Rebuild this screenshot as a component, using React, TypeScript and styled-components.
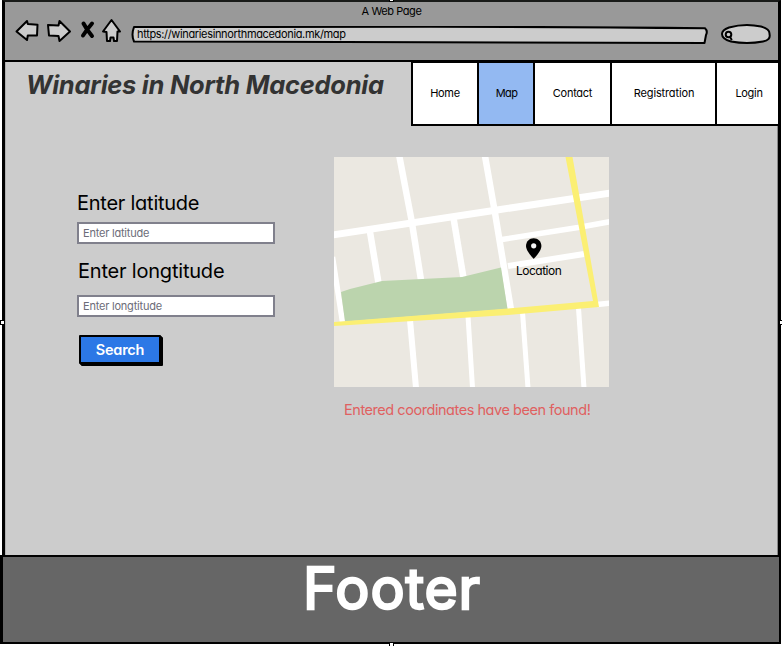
import React from "react";
import styled, { createGlobalStyle } from "styled-components";

const GlobalStyle = createGlobalStyle`
  * { box-sizing: border-box; }
  body {
    margin: 0;
    background: #fff;
    color: #000;
    font-family: Inter, "Liberation Sans", sans-serif;
    font-feature-settings: "cv11";
    overflow: hidden;
  }
  h1, h2, p { margin: 0; }
`;

const Browser = styled.div`
  position: relative;
  width: 782px;
  height: 646px;
  display: flex;
  flex-direction: column;
  background: #fff;
`;

const Toolbar = styled.header`
  height: 62px;
  margin: 0 1px 0 2px;
  background: #999;
  border: solid #000;
  border-width: 2px 3px 2px 3px;
  border-top-color: #191b19;
  display: flex;
  flex-direction: column;
`;

const PageTitle = styled.p`
  height: 19px;
  line-height: 19px;
  font-size: 11px;
  letter-spacing: -0.43px;
  text-align: center;
`;

const Controls = styled.div`
  display: flex;
  align-items: flex-start;
  height: 39px;
  padding-left: 11px;
`;

const NavIcon = styled.svg<{ $gap: number; $drop?: number }>`
  flex: none;
  display: block;
  margin-right: ${(p) => p.$gap}px;
  margin-top: ${(p) => p.$drop ?? 0}px;
  overflow: visible;
  fill: #ccc;
  stroke: #000;
  stroke-width: 2;
  stroke-linejoin: round;
  stroke-linecap: round;
`;

const Address = styled.div`
  position: relative;
  width: 577px;
  height: 18px;
  margin: 5px 13px 0 0;
  padding-left: 6px;
  line-height: 17px;
  font-size: 11px;
  letter-spacing: -0.345px;
`;

const Outline = styled.svg`
  position: absolute;
  inset: 0;
  z-index: 0;
  fill: #ccc;
  stroke: #000;
  stroke-width: 2;
  stroke-linejoin: round;
`;

const Url = styled.span`
  position: relative;
`;

const Main = styled.main`
  height: 493px;
  margin: 0 1px 0 2px;
  background: #ccc;
  border: solid #000;
  border-width: 0 3px;
  box-shadow: inset 1px 0 #b0b0b0, inset -1px 0 #888;
`;

const Masthead = styled.div`
  display: flex;
  justify-content: space-between;
  height: 65px;
`;

const SiteTitle = styled.h1`
  padding: 6px 0 0 21px;
  line-height: 34px;
  font-size: 25.5px;
  font-weight: 700;
  font-style: italic;
  letter-spacing: -0.26px;
  white-space: nowrap;
  color: #333;
`;

const Nav = styled.nav`
  display: flex;
  flex: none;
  height: 64px;
  border-bottom: 2px solid #000;
  border-top: 1px solid #000;
`;

const NavItem = styled.a<{ $width: number; $spacing: number; $active?: boolean; $shift?: number }>`
  width: ${(p) => p.$width}px;
  padding-left: ${(p) => p.$shift ?? 0}px;
  border-left: 2px solid #000;
  background: ${(p) => (p.$active ? "#93b9f2" : "#fff")};
  font-size: 11px;
  letter-spacing: ${(p) => p.$spacing}px;
  line-height: 60px;
  text-align: center;
`;

const Content = styled.div`
  display: flex;
  align-items: flex-start;
  padding-left: 72px;
`;

const SearchForm = styled.form`
  width: 257px;
  padding-top: 63px;
  display: flex;
  flex-direction: column;
  align-items: flex-start;
`;

const Label = styled.label<{ $indent?: number; $spacing: number }>`
  padding-left: ${(p) => p.$indent ?? 0}px;
  height: 26px;
  line-height: 26px;
  font-size: 20px;
  letter-spacing: ${(p) => p.$spacing}px;
`;

const Field = styled.input<{ $after: number; $before: number }>`
  width: 198px;
  height: 22px;
  margin: ${(p) => p.$before}px 0 ${(p) => p.$after}px;
  padding: 0 4px;
  border: 2px solid #80808c;
  border-radius: 0;
  background: #fff;
  font: 400 11px Inter, "Liberation Sans", sans-serif;
  font-feature-settings: "cv11";
  letter-spacing: -0.21px;
  &::placeholder { color: #6c6c78; opacity: 1; }
`;

const SearchButton = styled.button`
  width: 82px;
  height: 29px;
  margin: 0 0 0 2px;
  padding: 0;
  border: 2px solid #000;
  border-radius: 1px;
  background: #2c78e6;
  box-shadow: 1px 1px #000, 2px 2px #000;
  color: #fff;
  font: 600 14.5px Inter, "Liberation Sans", sans-serif;
  font-feature-settings: "cv11";
  letter-spacing: -0.25px;
`;

const Result = styled.section`
  width: 275px;
  padding-top: 30px;
`;

const MapFrame = styled.div`
  position: relative;
  width: 275px;
  height: 230px;
`;

const MapArt = styled.svg`
  display: block;
`;

const PinLabel = styled.span`
  position: absolute;
  left: 182px;
  top: 105px;
  line-height: 18px;
  font-size: 12px;
  letter-spacing: -0.5px;
`;

const Message = styled.p`
  padding-left: 10px;
  margin-top: 12px;
  line-height: 22px;
  font-size: 14.5px;
  letter-spacing: -0.45px;
  white-space: nowrap;
  color: #e06060;
`;

const Footer = styled.footer`
  height: 89px;
  margin-right: 1px;
  border: 2px solid #000;
  box-shadow: inset 1px 0 #000;
  background: #666;
  display: flex;
  justify-content: center;
`;

const FooterText = styled.h2`
  color: #fff;
  font-size: 57px;
  font-weight: 400;
  line-height: 63px;
  letter-spacing: 0.9px;
  padding-left: 3px;
  -webkit-text-stroke: 2.4px #fff;
  stroke-linejoin: round;
`;

const Handle = styled.i<{ $x: number; $y: number }>`
  position: absolute;
  left: ${(p) => p.$x}px;
  top: ${(p) => p.$y}px;
  width: 5px;
  height: 5px;
  background: #fff;
  border: 1px solid #000;
`;

const streets: [string, number][] = [
  ["M-2 78 L163 53 L277 36", 7],
  ["M65.300 -1 L77.500 63 L87 123", 6.5],
  ["M151 -1 L161 56 L177 153", 6.5],
  ["M36 75 L44.500 126", 6.5],
  ["M119.500 61 L129.500 121", 6.500],
  ["M-1.500 100 L8.500 165", 5.5],
  ["M168 82.500 L244 70.500 L277 64.500", 5.5],
  ["M174 109 L250 97", 6],
  ["M263 147.500 L277 146", 5.5],
  ["M76 163 L82 231", 6],
  ["M134 159 L138.500 231", 5],
  ["M188.500 155 L194 231", 5],
  ["M244.500 151 L250 231", 5],
];

const navItems = [
  { label: "Home", width: 66, spacing: -0.33, shift: 0 },
  { label: "Map", width: 56, spacing: -0.6, shift: 1 },
  { label: "Contact", width: 77, spacing: -0.27, shift: 0 },
  { label: "Registration", width: 105, spacing: -0.14, shift: 1 },
  { label: "Login", width: 63, spacing: -0.3, shift: 3 },
];

function MapView() {
  return (
    <MapFrame>
      <MapArt width="275" height="230" viewBox="0 0 275 230">
        <rect width="275" height="230" fill="#ebe8e1" />
        <g fill="none" stroke="#fff">
          {streets.map(([d, width]) => (
            <path key={d} d={d} strokeWidth={width} />
          ))}
        </g>
        <path d="M7 135 L16 132 L48 124 L128 120 L167 110.500 L173.500 152 L11 164.500Z" fill="#bbd4ad" />
        <path d="M231.500 0 H238.500 L265 150 L174 158 L0 169 V165 L174 151.500 L259 144Z" fill="#fbef73" />
        <path
          d="M199.700 81.200c-4.300 0-7.700 3.400-7.700 7.700 0 5.300 7.700 12.900 7.700 12.900s7.700-7.600 7.700-12.900c0-4.300-3.400-7.700-7.700-7.700z"
          fill="#000"
        />
        <circle cx="199.700" cy="88.800" r="2.600" fill="#f5f5f5" />
      </MapArt>
      <PinLabel>Location</PinLabel>
    </MapFrame>
  );
}

export default function App() {
  return (
    <>
      <GlobalStyle />
      <Browser>
        <Toolbar>
          <PageTitle>A Web Page</PageTitle>
          <Controls>
            <NavIcon width="24" height="22" $gap={7} $drop={-1}>
              <path d="M0.500 11.500 L11 1 L11.800 4 L21.500 4.700 L21 15.500 L11.800 15.500 L11 20Z" />
            </NavIcon>
            <NavIcon width="24" height="22" $gap={10} $drop={-1}>
              <path d="M1 5 L11.500 5.500 L12.500 1 L23 11.500 L12.500 21 L11.500 16 L2 15.500Z" />
            </NavIcon>
            <NavIcon width="14" height="16" $gap={7} $drop={1}>
              <path d="M2.500 1.500 Q6 8 11 14 M11 1.500 Q7 6 2 13.500" fill="none" strokeWidth="4" />
            </NavIcon>
            <NavIcon width="19" height="23" $gap={10} $drop={-1}>
              <path d="M9.500 0 L18 11.500 L15.500 11.500 L15 21 L12 21 L11.500 17.500 L8.500 17.500 L8 21 L5 21 L4.500 12 L1 11.500Z" />
            </NavIcon>
            <Address>
              <Outline width="577" height="18">
                <path d="M3 1 Q150 0.500 300 0.700 T574 2.200 Q577 5 575 9 L573.500 17 Q420 16.500 300 16.300 T3 15.500 Q0 9 3 1Z" />
              </Outline>
              <Url>https://winariesinnorthmacedonia.mk/map</Url>
            </Address>
            <NavIcon width="50" height="20" $gap={0} $drop={3}>
              <path d="M8 3.500 Q24 -1 40 2.500 Q49 5 48.500 10 Q50 16 42 17.500 Q26 20.500 10 17.500 Q1 15 1 10 Q1 6 8 3.500Z" />
              <circle cx="7.500" cy="10.500" r="2.800" />
              <path d="M9 13 L10.500 15.500" />
            </NavIcon>
          </Controls>
        </Toolbar>
        <Main>
          <Masthead>
            <SiteTitle>Winaries in North Macedonia</SiteTitle>
            <Nav>
              {navItems.map((item) => (
                <NavItem
                  key={item.label}
                  $width={item.width}
                  $spacing={item.spacing}
                  $shift={item.shift}
                  $active={item.label === "Map"}
                >
                  {item.label}
                </NavItem>
              ))}
            </Nav>
          </Masthead>
          <Content>
            <SearchForm>
              <Label htmlFor="lat" $spacing={-0.25}>Enter latitude</Label>
              <Field id="lat" placeholder="Enter latitude" $before={6} $after={14} />
              <Label htmlFor="lng" $indent={1} $spacing={-0.2}>Enter longtitude</Label>
              <Field id="lng" placeholder="Enter longtitude" $before={11} $after={18} />
              <SearchButton type="button">Search</SearchButton>
            </SearchForm>
            <Result>
              <MapView />
              <Message>Entered coordinates have been found!</Message>
            </Result>
          </Content>
        </Main>
        <Footer>
          <FooterText>Footer</FooterText>
        </Footer>
        <Handle $x={389} $y={-3} />
        <Handle $x={389} $y={642} />
        <Handle $x={0} $y={320} />
        <Handle $x={779} $y={320} />
      </Browser>
    </>
  );
}
